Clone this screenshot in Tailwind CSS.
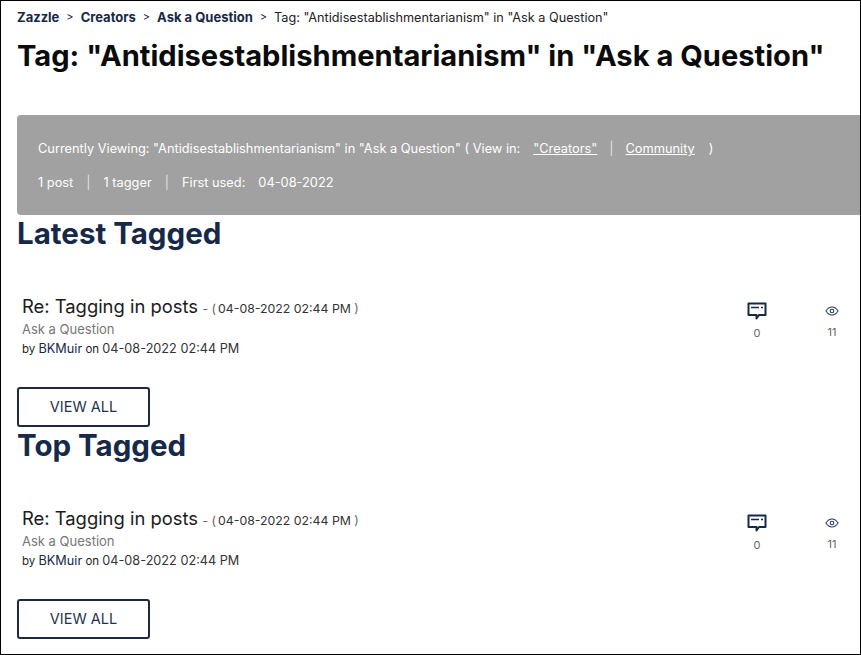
<!DOCTYPE html>
<html lang="en">
<head>
    <meta charset="UTF-8">
    <meta name="viewport" content="width=device-width, initial-scale=1.0">
    <title>Tag: "Antidisestablishmentarianism" in "Ask a Question"</title>
    <script src="https://cdn.jsdelivr.net/npm/@tailwindcss/browser@4"></script>
</head>
<body class="bg-white overflow-hidden font-['Inter',sans-serif]">
    <div class="h-[655px] w-[861px] border border-black overflow-hidden">
        <!-- breadcrumb -->
        <nav class="flex items-center h-[15px] mt-[9px] ml-4 text-[12.7px] leading-[15px] text-[#222] whitespace-nowrap">
            <a class="font-bold text-[13px] text-[#162949]">Zazzle</a>
            <span class="mx-[7px] text-[11px] text-[#162949]">&gt;</span>
            <a class="font-bold text-[13px] text-[#162949]">Creators</a>
            <span class="mx-[7px] text-[11px] text-[#162949]">&gt;</span>
            <a class="font-bold text-[13px] text-[#162949]">Ask a Question</a>
            <span class="mx-[7px] text-[11px] text-[#162949]">&gt;</span>
            <span>Tag: "Antidisestablishmentarianism" in "Ask a Question"</span>
        </nav>
        <h1 class="ml-4 mt-[12px] text-[29.1px] leading-[38px] font-bold text-[#0b0b0b] whitespace-nowrap">Tag: "Antidisestablishmentarianism" in "Ask a Question"</h1>

        <!-- info panel -->
        <div class="mt-[40px] ml-4 -mr-px h-[100px] bg-[#a1a1a1] rounded-l-[4px] pl-[21px] text-white text-[12.8px] leading-[18px]">
            <div class="flex items-center pt-[25px] whitespace-pre">
                <span>Currently Viewing: "Antidisestablishmentarianism" in "Ask a Question" ( View in:</span>
                <a class="ml-[13px] underline">"Creators"</a>
                <span class="mx-[12px] text-white/70">|</span>
                <a class="underline">Community</a>
                <span class="ml-[14px]">)</span>
            </div>
            <div class="flex items-center mt-[16px]">
                <span>1 post</span>
                <span class="mx-[13px] text-white/70">|</span>
                <span>1 tagger</span>
                <span class="mx-[13px] text-white/70">|</span>
                <span>First used:</span>
                <span class="ml-[13px]">04-08-2022</span>
            </div>
        </div>

        <!-- latest tagged -->
        <section>
            <h2 class="ml-4 h-[38px] text-[29.5px] leading-[36px] font-bold text-[#162949]">Latest Tagged</h2>
            <div class="flex justify-between ml-[21px] mt-[40px] mr-[18px] h-[60px]">
                <div>
                    <div class="h-[24px] leading-[26px] text-[#1b1b1b] whitespace-nowrap"><span class="text-[18.4px]">Re: Tagging in posts</span> <span class="text-[12.3px] text-[#666]">- (<span class="text-[#333] ml-[2px]">04-08-2022 02:44 PM</span> )</span></div>
                    <div class="mt-[2px] text-[13px] leading-[20px] text-[#777]">Ask a Question</div>
                    <div class="mt-px text-[11.5px] leading-[18px] text-[#222]">by <span class="text-[12.7px] text-[#162949]">BKMuir</span> on <span class="text-[12.7px] text-[#333]">04-08-2022 02:44 PM</span></div>
                </div>
                <div class="flex items-start pt-[9px]">
                    <div class="w-[20px] flex flex-col items-center">
                        <svg width="20" height="19" viewBox="0 0 20 19" fill="none"><path d="M1.5 1.5h17v11.5h-6.5l-2.5 3.5v-3.5h-8z" stroke="#162949" stroke-width="2" stroke-linejoin="round"/><path d="M4 5.500h8" stroke="#162949" stroke-width="1.5"/><path d="M14 5.500h2" stroke="#162949" stroke-width="1.5"/></svg>
                        <span class="mt-[5px] text-[11px] leading-[14px] text-[#666]">0</span>
                    </div>
                    <div class="w-[20px] ml-[55px] flex flex-col items-center">
                        <svg class="mt-[4px]" width="14" height="10" viewBox="0 0 14 10" fill="none"><path d="M1 5c1.500-2.500 3.500-4 6-4s4.500 1.500 6 4c-1.500 2.500-3.500 4-6 4s-4.500-1.500-6-4z" stroke="#2b3b57" stroke-width="1.1"/><circle cx="7" cy="5" r="1.800" stroke="#2b3b57" stroke-width="1.1"/></svg>
                        <span class="mt-[9px] text-[11px] leading-[14px] text-[#666]">11</span>
                    </div>
                </div>
            </div>
            <a class="flex items-center justify-center w-[133px] h-[40px] ml-4 mt-[34px] pb-px border-2 border-[#1d2a3e] rounded-[3px] text-[14.5px] text-[#24324a]">VIEW ALL</a>
        </section>

        <!-- top tagged -->
        <section>
            <h2 class="ml-4 h-[38px] text-[29.5px] leading-[36px] font-bold text-[#162949]">Top Tagged</h2>
            <div class="flex justify-between ml-[21px] mt-[40px] mr-[18px] h-[60px]">
                <div>
                    <div class="h-[24px] leading-[26px] text-[#1b1b1b] whitespace-nowrap"><span class="text-[18.4px]">Re: Tagging in posts</span> <span class="text-[12.3px] text-[#666]">- (<span class="text-[#333] ml-[2px]">04-08-2022 02:44 PM</span> )</span></div>
                    <div class="mt-[2px] text-[13px] leading-[20px] text-[#777]">Ask a Question</div>
                    <div class="mt-px text-[11.5px] leading-[18px] text-[#222]">by <span class="text-[12.7px] text-[#162949]">BKMuir</span> on <span class="text-[12.7px] text-[#333]">04-08-2022 02:44 PM</span></div>
                </div>
                <div class="flex items-start pt-[9px]">
                    <div class="w-[20px] flex flex-col items-center">
                        <svg width="20" height="19" viewBox="0 0 20 19" fill="none"><path d="M1.5 1.5h17v11.5h-6.5l-2.500 3.500v-3.500h-8z" stroke="#162949" stroke-width="2" stroke-linejoin="round"/><path d="M4 5.500h8" stroke="#162949" stroke-width="1.5"/><path d="M14 5.500h2" stroke="#162949" stroke-width="1.5"/></svg>
                        <span class="mt-[5px] text-[11px] leading-[14px] text-[#666]">0</span>
                    </div>
                    <div class="w-[20px] ml-[55px] flex flex-col items-center">
                        <svg class="mt-[4px]" width="14" height="10" viewBox="0 0 14 10" fill="none"><path d="M1 5c1.500-2.500 3.500-4 6-4s4.500 1.500 6 4c-1.500 2.500-3.500 4-6 4s-4.500-1.500-6-4z" stroke="#2b3b57" stroke-width="1.1"/><circle cx="7" cy="5" r="1.800" stroke="#2b3b57" stroke-width="1.1"/></svg>
                        <span class="mt-[9px] text-[11px] leading-[14px] text-[#666]">11</span>
                    </div>
                </div>
            </div>
            <a class="flex items-center justify-center w-[133px] h-[40px] ml-4 mt-[34px] pb-px border-2 border-[#1d2a3e] rounded-[3px] text-[14.5px] text-[#24324a]">VIEW ALL</a>
        </section>
    </div>
</body>
</html>
